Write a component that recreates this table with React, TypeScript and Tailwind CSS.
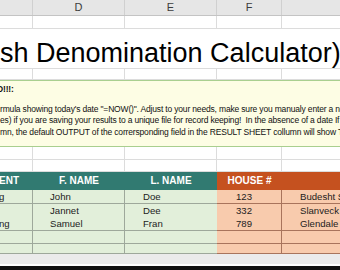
import React from "react";

const cols = "grid grid-cols-[33px_92px_92px_65px_1fr]";

const EmptyRow = ({ h }: { h: string }) => (
  <div className={`${cols} ${h}`}>
    <div className="border-r border-b border-[#dcdcdc]" />
    <div className="border-r border-b border-[#dcdcdc]" />
    <div className="border-r border-b border-[#dcdcdc]" />
    <div className="border-r border-b border-[#dcdcdc]" />
    <div className="border-b border-[#dcdcdc]" />
  </div>
);

const rows = [
  { dept: "g", first: "John", last: "Doe", house: "123", street: "Budesht Street", h: "h-[14px]" },
  { dept: "", first: "Jannet", last: "Dee", house: "332", street: "Slanveck Road", h: "h-[13px]" },
  { dept: "ng", first: "Samuel", last: "Fran", house: "789", street: "Glendale Ave", h: "h-[14px]" },
  { dept: "", first: "", last: "", house: "", street: "", h: "h-[13px]" },
  { dept: "", first: "", last: "", house: "", street: "", h: "h-[10px]" },
];

const App = () => {
  return (
    <div className="w-[340px] h-[270px] overflow-hidden bg-white font-['Liberation_Sans',Arial,sans-serif] text-[#1c1c1c]">
      {/* column letters */}
      <div className={`${cols} h-[16px] bg-[#e6e6e6] border-b border-[#c4c4c4] text-[11px] text-[#3c3c3c] leading-[15px]`}>
        <div className="border-r border-[#d0d0d0]" />
        <div className="border-r border-[#d0d0d0] text-center">D</div>
        <div className="border-r border-[#d0d0d0] text-center">E</div>
        <div className="border-r border-[#d0d0d0] text-center">F</div>
        <div />
      </div>

      <EmptyRow h="h-[13px]" />

      {/* merged title row */}
      <div className="h-[40px] border-b border-[#dcdcdc] pt-[8px] overflow-hidden">
        <div className="whitespace-nowrap text-[27px] leading-[32px] text-black">
          sh Denomination Calculator)
        </div>
      </div>

      <EmptyRow h="h-[11px]" />

      {/* note box */}
      <div className="h-[67px] border-y border-[#a9cf8f] bg-[#fdfde4] text-[8.5px] tracking-[-0.17px] leading-[11.6px] text-[#111111] whitespace-nowrap overflow-hidden pt-[3px]">
        <div className="ml-[-3px] font-bold">D!!!:</div>
        <div className="mt-[8px]">
          rmula showing today's date "=NOW()". Adjust to your needs, make sure you manualy enter a new date
        </div>
        <div>
          es) if you are saving your results to a unique file for record keeping!&nbsp; In the absence of a date If
        </div>
        <div>
          mn, the default OUTPUT of the corrersponding field in the RESULT SHEET collumn will show Today
        </div>
      </div>

      <EmptyRow h="h-[13px]" />
      <EmptyRow h="h-[12px]" />

      {/* table header */}
      <div className={`${cols} h-[18px] text-[10px] font-bold text-white leading-[18px]`}>
        <div className="bg-[#317a71] flex justify-end pr-[14px]">ENT</div>
        <div className="bg-[#317a71] text-center">F. NAME</div>
        <div className="bg-[#317a71] text-center">L. NAME</div>
        <div className="bg-[#c5511f] text-center">HOUSE #</div>
        <div className="bg-[#c5511f]" />
      </div>

      {rows.map((r, i) => (
        <div key={i} className={`${cols} ${r.h} text-[9.6px] leading-[13px] whitespace-nowrap overflow-hidden`}>
          <div className="bg-[#e2efda] border-r border-b border-[#9ea89b] ml-[-1px] overflow-hidden">{r.dept}</div>
          <div className="bg-[#e2efda] border-r border-b border-[#9ea89b] pl-[17px]">{r.first}</div>
          <div className="bg-[#e2efda] border-b border-[#9ea89b] pl-[18px]">{r.last}</div>
          <div className="bg-[#f8cbad] border-r border-b border-[#a8745c] pl-[19px]">{r.house}</div>
          <div className="bg-[#f8cbad] border-b border-[#a8745c] pl-[18px] overflow-hidden">{r.street}</div>
        </div>
      ))}

      {/* scroll area */}
      <div className="h-[10px] bg-[#ebebeb]" />
      <div className="h-[2px] bg-white" />
      <div className="h-[10px] bg-[#111111]" />
    </div>
  );
};

export default App;
